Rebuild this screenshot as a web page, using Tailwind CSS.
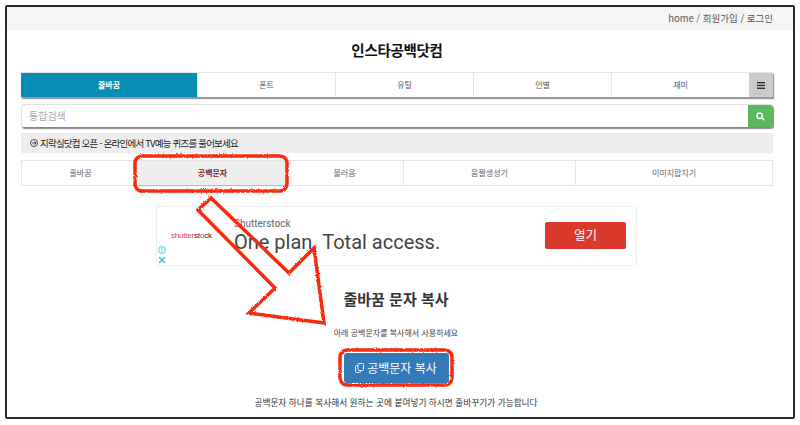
<!DOCTYPE html>
<html lang="ko">
<head>
  <meta charset="UTF-8" />
  <title>인스타공백닷컴</title>
  <script src="https://cdn.jsdelivr.net/npm/@tailwindcss/browser@4"></script>
</head>
<body class="bg-white">
  <div class="relative w-[800px] h-[425px] overflow-hidden bg-white pl-[5px] pt-[5px] font-['Noto_Sans_CJK_KR','Noto_Sans',sans-serif] text-[#333]">
    <div class="w-[790px] h-[414px] border-2 border-[#2b2b2b] rounded-[2px] overflow-hidden">

      <!-- top links -->
      <div class="h-[23px] bg-[#f5f5f5] flex items-center justify-end pr-[20px] text-[9.5px] text-[#555]">home / 회원가입 / 로그인</div>

      <div class="pl-[14px] pr-[20px]">
        <h1 class="h-[42px] pb-[2px] flex items-center justify-center text-[14.5px] font-bold text-[#111] tracking-[-0.3px]">인스타공백닷컴</h1>

        <!-- main menu -->
        <div class="flex h-[25px] w-[752px] border-t border-[#e5e5e5] shadow-[1px_2px_1px_#999] text-[8px] text-[#555]">
          <div class="w-[176px] bg-[#058fb4] text-white font-bold flex items-center justify-center">줄바꿈</div>
          <div class="w-[138px] border-l border-[#e5e5e5] flex items-center justify-center">폰트</div>
          <div class="w-[138px] border-l border-[#e5e5e5] flex items-center justify-center">유틸</div>
          <div class="w-[138px] border-l border-[#e5e5e5] flex items-center justify-center">인별</div>
          <div class="w-[138px] border-l border-[#e5e5e5] flex items-center justify-center">재미</div>
          <div class="w-[24px] bg-[#cbcbcb] flex items-center justify-center">
            <svg width="8" height="7" viewBox="0 0 8 7" fill="#222"><rect width="8" height="1.3" /><rect y="2.8" width="8" height="1.3" /><rect y="5.6" width="8" height="1.3" /></svg>
          </div>
        </div>

        <!-- search -->
        <div class="flex h-[23px] w-[752px] mt-[7px] rounded-[3px] border-t border-l border-[#e2e2e2] shadow-[1px_2px_1px_#888] overflow-hidden">
          <div class="flex-1 flex items-center pl-[7px] pb-[2px] text-[10px] text-[#aaa]">통합검색</div>
          <div class="w-[25px] bg-[#5cb85c] flex items-center justify-center">
            <svg width="9" height="9" viewBox="0 0 9 9" fill="none" stroke="#fff" stroke-width="1.5"><circle cx="3.7" cy="3.7" r="2.7" /><path d="M5.7 5.7 8.3 8.3" /></svg>
          </div>
        </div>

        <!-- notice -->
        <div class="flex items-center gap-[2px] h-[20px] w-[752px] mt-[6px] bg-[#eeeeee] pl-[9px] text-[9.5px] text-[#222] tracking-[-0.8px]">
          <svg width="8" height="8" viewBox="0 0 8 8" fill="none" stroke="#222" stroke-width="0.8"><circle cx="4" cy="4" r="3.5" /><path d="M2 4h4M4.4 2.5 6 4 4.4 5.5" /></svg>
          <span>지락실닷컴 오픈 - 온라인에서 TV예능 퀴즈를 풀어보세요</span>
        </div>

        <!-- sub menu -->
        <div class="flex h-[26px] w-[752px] mt-[7px] border border-[#e5e5e5] text-[8px] text-[#666]">
          <div class="w-[117px] flex items-center justify-center">줄바꿈</div>
          <div class="w-[147px] bg-[#eeeeee] shadow-[0_1px_1px_#bbb] text-[#7a1f1f] font-bold flex items-center justify-center">공백문자</div>
          <div class="w-[117px] flex items-center justify-center">블러옴</div>
          <div class="w-[172px] border-l border-[#e5e5e5] flex items-center justify-center">움짤생성기</div>
          <div class="flex-1 border-l border-[#e5e5e5] flex items-center justify-center">이미지합치기</div>
        </div>

        <!-- ad -->
        <div class="relative flex items-center w-[481px] h-[60px] mt-[20px] ml-[135px] border border-[#efefef]">
          <div class="w-[77px] pl-[14px] text-[8px] font-['Liberation_Sans',sans-serif] tracking-[-0.2px] text-[#e33b3b]">shutter<span class="text-[#222]">st</span>o<span class="text-[#222]">ck</span></div>
          <div class="flex-1 font-['Roboto',sans-serif] text-[#444]">
            <div class="text-[10px] leading-[13px] text-[#666]">Shutterstock</div>
            <div class="text-[20px] leading-[25px]">One plan. Total access.</div>
          </div>
          <div class="w-[81px] h-[27px] mr-[10px] mb-[2px] rounded-[2px] bg-[#dc392d] text-white text-[12.5px] flex items-center justify-center">열기</div>
          <div class="absolute left-[1px] bottom-[1px] flex flex-col items-center gap-[2px]">
            <svg width="8" height="8" viewBox="0 0 8 8" fill="none" stroke="#2fb4dc" stroke-width="0.8"><circle cx="4" cy="4" r="3.4" /><path d="M4 3.3v2.6M4 2v.8" /></svg>
            <svg width="8" height="8" viewBox="0 0 8 8" fill="none" stroke="#2fb4dc" stroke-width="1.2"><path d="M1 1l6 6M7 1 1 7" /></svg>
          </div>
        </div>

        <!-- copy section -->
        <div class="flex flex-col items-center w-[750px]">
          <h2 class="mt-[22px] text-[15px] leading-[22px] font-bold text-[#333]">줄바꿈 문자 복사</h2>
          <p class="mt-[17px] text-[8px] leading-[12px] text-[#444]">아래 공백문자를 복사해서 사용하세요</p>
          <div class="h-[14px] text-[6px] leading-[14px] text-[#999]">..</div>
          <div class="flex items-center justify-center gap-[3px] w-[105px] h-[30px] rounded-[3px] bg-[#337ab7] text-white text-[12px]">
            <svg width="9" height="10" viewBox="0 0 9 10" fill="none" stroke="#fff" stroke-width="0.9"><rect x="3" y="0.5" width="5.5" height="7" rx="1" /><path d="M3 2.5H1.5a1 1 0 0 0-1 1v5a1 1 0 0 0 1 1h3a1 1 0 0 0 1-1V7.5" /></svg>
            <span>공백문자 복사</span>
          </div>
          <p class="mt-[13px] text-[8.7px] leading-[14px] text-[#333]">공백문자 하나를 복사해서 원하는 곳에 붙여넣기 하시면 줄바꾸기가 가능합니다</p>
        </div>
      </div>
    </div>

    <!-- hand drawn markup over the page -->
    <svg class="absolute left-0 top-0" width="800" height="425" viewBox="0 0 800 425" fill="none" stroke="#fb2a0c" stroke-width="3.5">
      <defs>
        <filter id="rough" x="-5%" y="-5%" width="110%" height="110%">
          <feTurbulence type="fractalNoise" baseFrequency="0.6" numOctaves="2" seed="3" />
          <feDisplacementMap in="SourceGraphic" scale="2.5" />
        </filter>
      </defs>
      <g filter="url(#rough)">
        <rect x="135" y="156" width="152" height="35" rx="7" />
        <rect x="340" y="350" width="112" height="35" rx="7" />
        <path d="M211 198 198 210 275 288 249 313 324 323 314 248 289 273Z" />
      </g>
    </svg>
  </div>
</body>
</html>
